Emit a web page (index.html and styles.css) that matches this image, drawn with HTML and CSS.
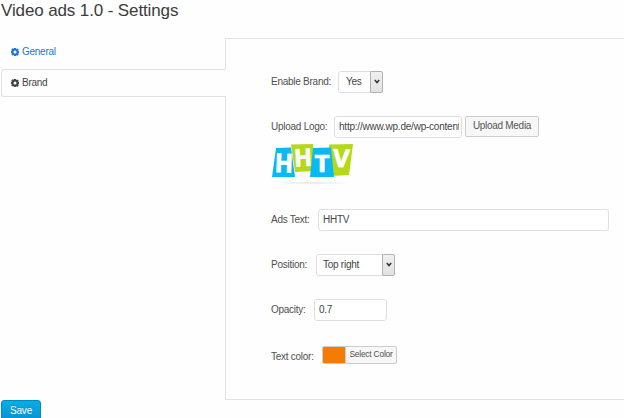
FILE: index.html
```html
<!DOCTYPE html>
<html lang="en">
<head>
<meta charset="utf-8">
<title>Video ads 1.0 - Settings</title>
<link rel="stylesheet" href="styles.css">
</head>
<body>
<svg width="0" height="0" class="defs">
  <symbol id="gear" viewBox="0 0 16 16">
    <path fill="currentColor" fill-rule="evenodd" d="M6 0h4l.5 1.500 1 .5 1.900-.8 1.900 2-.8 1.800.5 1 1 .5v3.500l-1 .5-.5 1 .8 1.800-2 2-1.800-.8-1 .5L10 16H6l-.5-1.500-1-.5-1.800.8-2-2 .8-1.800-.5-1-1-.5V6l1-.5.5-1L.7 2.700l2-2 1.800.8 1-.5zM8 5a3 3 0 1 0 0 6A3 3 0 0 0 8 5z"/>
  </symbol>
</svg>
<h1 class="title">Video ads 1.0 - Settings</h1>
<main class="layout">
  <nav class="tabs">
    <a class="tab"><svg class="gear"><use href="#gear"/></svg>General</a>
    <a class="tab active"><svg class="gear"><use href="#gear"/></svg>Brand</a>
  </nav>
  <section class="panel">
    <div class="row enable">
      <label class="label">Enable Brand:</label>
      <div class="select"><span class="value">Yes</span><span class="arrow"><svg viewBox="0 0 6 5"><path d="M.8 1 3 3.500 5.200 1"/></svg></span></div>
    </div>
    <div class="row upload">
      <label class="label">Upload Logo:</label>
      <div class="field"><span class="clip">http://www.wp.de/wp-content</span></div>
      <button class="media">Upload Media</button>
    </div>
    <svg class="logo" viewBox="0 0 84 46">
      <defs><radialGradient id="shade"><stop offset="0" stop-color="#e2e2e2"/><stop offset="1" stop-color="#fefefe"/></radialGradient></defs>
      <ellipse cx="41" cy="40" rx="41" ry="1.300" fill="url(#shade)"/>
      <path fill="#b5d817" d="M20 1.500 42 1 44 28 24 29zM58 1.500 82 1 78 32 60 33z"/>
      <path fill="#0ab9f2" d="M5 5 20 4.500 24 34 1 34zM42 5 60 4.500 63 34 39 34z"/>
      <g class="letters">
        <text transform="translate(3.500 29) rotate(2) scale(.92 1)">H</text>
        <text transform="translate(23.500 23.500) rotate(-3) scale(.9 .92)">H</text>
        <text transform="translate(43.500 28.500) scale(1 .92)">T</text>
        <text transform="translate(61.500 23.500) rotate(3) scale(.98 .94)">V</text>
      </g>
    </svg>
    <div class="row ads">
      <label class="label">Ads Text:</label>
      <div class="field">HHTV</div>
    </div>
    <div class="row position">
      <label class="label">Position:</label>
      <div class="select"><span class="value">Top right</span><span class="arrow"><svg viewBox="0 0 6 5"><path d="M.8 1 3 3.500 5.200 1"/></svg></span></div>
    </div>
    <div class="row opacity">
      <label class="label">Opacity:</label>
      <div class="field">0.7</div>
    </div>
    <div class="row color">
      <label class="label">Text color:</label>
      <div class="picker"><span class="swatch"></span><span class="pick">Select Color</span></div>
    </div>
  </section>
</main>
<button class="save">Save</button>
</body>
</html>
```
FILE: styles.css
```css
* { box-sizing: border-box; }
body {
  margin: 0;
  height: 418px;
  overflow: hidden;
  background: #fefefe;
  color: #505050;
  font: 10px/12px "Liberation Sans", Arial, sans-serif;
  letter-spacing: -.26px;
}
.defs { display: block; }
.title {
  margin: 0;
  height: 38px;
  padding-left: 1px;
  font-size: 17px;
  font-weight: 400;
  line-height: 22px;
  letter-spacing: -.12px;
  color: #3c3c3c;
  white-space: nowrap;
}
.layout { display: grid; grid-template-columns: 225px 1fr; height: 362px; }
.tabs { display: flex; flex-direction: column; padding-left: 1px; }
.tab {
  display: flex;
  align-items: center;
  height: 28px;
  padding-left: 10px;
  color: #1b78d0;
}
.tab.active {
  z-index: 1;
  margin: 3px -1px 0 0;
  padding-left: 9px;
  border: 1px solid #e2e2e2;
  border-right: 0;
  border-radius: 3px 0 0 3px;
  background: #fefefe;
  color: #444;
}
.gear { width: 8px; height: 8px; margin-right: 3px; }
.panel {
  border: 1px solid #e2e2e2;
  border-right: 0;
  padding: 31px 0 0 45px;
}
.row { display: flex; align-items: center; height: 23px; }
.label { flex: none; white-space: nowrap; }
.enable .label { width: 67px; }
.upload .label { width: 63px; }
.ads .label { width: 47px; }
.position .label { width: 45px; }
.opacity .label { width: 43px; }
.color .label { width: 51px; }
.upload { margin-top: 22px; }
.ads { margin-top: 19px; }
.position { margin-top: 22px; }
.opacity { margin-top: 22px; }
.color { margin-top: 24px; }
.select, .field {
  display: flex;
  align-items: center;
  height: 22px;
  border: 1px solid #dedede;
  border-radius: 3px;
  background: #fff;
  color: #444;
}
.enable .select { width: 45px; }
.position .select { width: 79px; }
.value { flex: 1; padding-left: 7px; }
.position .value { padding-left: 6px; }
.arrow {
  display: flex;
  align-items: center;
  justify-content: center;
  width: 13px;
  height: 22px;
  margin-right: -1px;
  border: 1px solid #b2b2b2;
  border-radius: 1px 2px 2px 1px;
  background: linear-gradient(#f0f0f0, #e2e2e2);
}
.arrow svg { width: 6px; height: 5px; fill: none; stroke: #333; stroke-width: 1.5; }
.field { padding: 0 4px; }
.upload .field { width: 128px; padding-right: 1px; }
.clip { width: 120px; overflow: hidden; white-space: nowrap; letter-spacing: -.22px; }
.ads .field { width: 291px; }
.opacity .field { width: 73px; }
.media {
  width: 74px;
  height: 21px;
  margin: -1px 0 0 3px;
  padding: 0;
  border: 1px solid #ccc;
  border-radius: 2px;
  background: #f7f7f7;
  color: #555;
  font: inherit;
  letter-spacing: -.29px;
}
.logo { display: block; width: 84px; height: 46px; margin-top: 5px; overflow: visible; }
.letters {
  fill: #fff;
  stroke: #fff;
  stroke-width: .8;
  font: bold 26px "Open Sans", sans-serif;
  letter-spacing: 0;
}
.picker {
  display: flex;
  width: 75px;
  height: 18px;
  margin-top: -3px;
  border: 1px solid #ccc;
  border-radius: 2px;
  background: #f7f7f7;
  overflow: hidden;
}
.swatch { width: 22px; background: #f57c00; }
.pick {
  flex: 1;
  border-left: 1px solid #ccc;
  font-size: 8.4px;
  line-height: 15px;
  letter-spacing: -.2px;
  text-align: center;
  white-space: nowrap;
}
.save {
  display: block;
  width: 40px;
  height: 22px;
  margin-left: 1px;
  padding: 0;
  border: 1px solid #0789bd;
  border-radius: 3px;
  background: linear-gradient(#08ade6, #0792d0);
  color: #fff;
  font: inherit;
  letter-spacing: -.2px;
  text-shadow: 0 -1px 0 rgba(0, 0, 0, .15);
}
```
